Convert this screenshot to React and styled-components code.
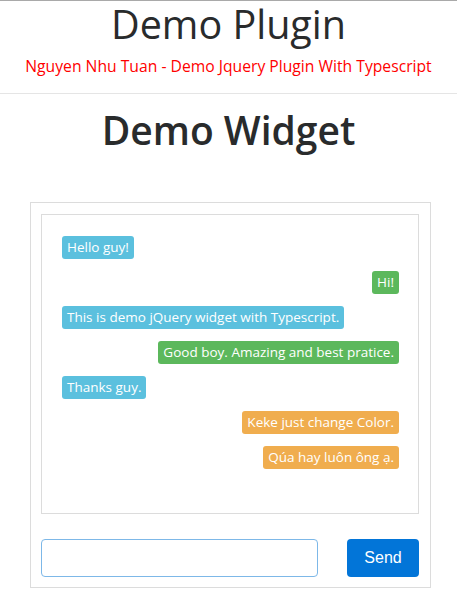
import styled, { createGlobalStyle } from 'styled-components';

const GlobalStyle = createGlobalStyle`
  html, body {
    margin: 0;
    padding: 0;
    background: #fff;
  }
  body {
    font-family: 'Open Sans', 'Noto Sans', sans-serif;
    color: #292b2c;
  }
`;

const Page = styled.div`
  width: 457px;
  min-height: 610px;
  border-top: 1px solid #a9a9a9;
  box-sizing: border-box;
`;

const Header = styled.header`
  text-align: center;
  border-bottom: 1px solid #e5e5e5;
  padding-bottom: 15px;
`;

const Title = styled.h1`
  margin: 0;
  font-size: 39.5px;
  line-height: 46px;
  font-weight: 500;
  color: #292b2c;
`;

const Subtitle = styled.p`
  margin: 7px 0 0;
  font-size: 15.7px;
  line-height: 24px;
  color: #f00;
`;

const WidgetTitle = styled.h2`
  margin: 12px 0 0;
  text-align: center;
  font-size: 39px;
  line-height: 48px;
  font-weight: 600;
  color: #292b2c;
`;

const Widget = styled.div`
  width: 401px;
  margin: 48px 0 0 30px;
  border: 1px solid #dcdcdc;
  box-sizing: border-box;
  padding: 11px 11px 10px 10px;
`;

const ChatBox = styled.div`
  height: 300px;
  border: 1px solid #dcdcdc;
  box-sizing: border-box;
  padding: 21px 19px 0 20px;
  display: flex;
  flex-direction: column;
  gap: 12px;
`;

const Row = styled.div`
  display: flex;
  justify-content: ${(p) => (p.$mine ? 'flex-end' : 'flex-start')};
`;

const colors = {
  info: '#5bc0de',
  success: '#5cb85c',
  warning: '#f0ad4e',
};

const Bubble = styled.span`
  display: inline-block;
  background: ${(p) => colors[p.$tone]};
  color: #fff;
  font-size: 13.5px;
  line-height: 23px;
  padding: 0 5px;
  border-radius: 3px;
  white-space: nowrap;
`;

const Composer = styled.div`
  display: flex;
  align-items: center;
  justify-content: space-between;
  margin-top: 25px;
`;

const Input = styled.input`
  width: 277px;
  height: 38px;
  box-sizing: border-box;
  border: 1px solid #7db8e8;
  border-radius: 4px;
  padding: 0 10px;
  font-size: 16px;
  outline: none;
`;

const SendButton = styled.button`
  width: 72px;
  height: 38px;
  border: none;
  border-radius: 4px;
  background: #0275d8;
  color: #fff;
  font-family: 'Liberation Sans', Arial, sans-serif;
  font-size: 16px;
  cursor: pointer;
`;

const messages = [
  { text: 'Hello guy!', tone: 'info' },
  { text: 'Hi!', tone: 'success', mine: true },
  { text: 'This is demo jQuery widget with Typescript.', tone: 'info' },
  { text: 'Good boy. Amazing and best pratice.', tone: 'success', mine: true },
  { text: 'Thanks guy.', tone: 'info' },
  { text: 'Keke just change Color.', tone: 'warning', mine: true },
  { text: 'Qúa hay luôn ông ạ.', tone: 'warning', mine: true },
];

const App = () => {
  return (
    <Page>
      <GlobalStyle />
      <Header>
        <Title>Demo Plugin</Title>
        <Subtitle>Nguyen Nhu Tuan - Demo Jquery Plugin With Typescript</Subtitle>
      </Header>
      <WidgetTitle>Demo Widget</WidgetTitle>
      <Widget>
        <ChatBox>
          {messages.map((m, i) => (
            <Row key={i} $mine={m.mine}>
              <Bubble $tone={m.tone}>{m.text}</Bubble>
            </Row>
          ))}
        </ChatBox>
        <Composer>
          <Input type="text" />
          <SendButton type="button">Send</SendButton>
        </Composer>
      </Widget>
    </Page>
  );
};

export default App;
